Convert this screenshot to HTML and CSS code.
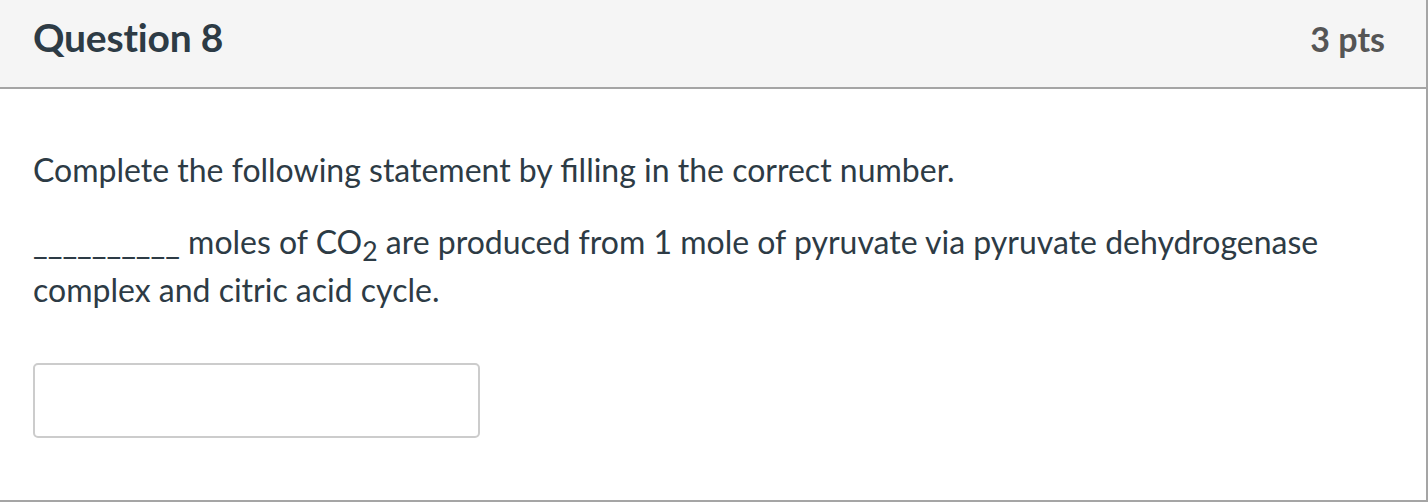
FILE: index.html
```html
<!DOCTYPE html>
<html lang="en">
<head>
<meta charset="utf-8">
<title>Question 8</title>
<link rel="stylesheet" href="styles.css">
</head>
<body>
<div class="question">
  <div class="question-header">
    <h2 class="question-title">Question 8</h2>
    <span class="question-points">3 pts</span>
  </div>
  <div class="question-body">
    <p class="question-text">Complete the following statement by filling in the correct number.</p>
    <p class="question-text">__________ moles of CO<sub class="sub">2</sub> are produced from 1 mole of pyruvate via pyruvate dehydrogenase complex and citric acid cycle.</p>
    <input class="answer-input" type="text" aria-label="Answer">
  </div>
</div>
</body>
</html>
```

FILE: styles.css
```css
html, body {
  margin: 0;
  padding: 0;
  background: #ffffff;
}

body {
  font-family: Lato, "Open Sans", "Liberation Sans", sans-serif;
  color: #2d3b45;
}

.question {
  width: 1426px;
  height: 500px;
  border-right: 2px solid #a5a5a5;
  border-bottom: 2px solid #a5a5a5;
  display: flex;
  flex-direction: column;
}

.question-header {
  height: 89px;
  box-sizing: border-box;
  background: #f5f5f5;
  border-bottom: 2px solid #a5a5a5;
  display: flex;
  align-items: baseline;
  justify-content: space-between;
  padding: 14px 41px 0 33px;
  flex: 0 0 auto;
}

.question-title {
  margin: 0;
  font-size: 39px;
  line-height: normal;
  font-weight: 700;
  color: #2d3b45;
  letter-spacing: -0.2px;
}

.question-points {
  font-size: 34px;
  font-weight: 700;
  color: #555555;
}

.question-body {
  padding: 57px 33px 0 33px;
  flex: 1 1 auto;
}

.question-text {
  margin: 0 0 24px 0;
  font-size: 32px;
  line-height: 48px;
}

.sub {
  font-size: 0.83em;
  vertical-align: -0.25em;
  line-height: 0;
}

.answer-input {
  display: block;
  margin-top: 49px;
  width: 447px;
  height: 75px;
  box-sizing: border-box;
  border: 2px solid #cccccc;
  border-radius: 5px;
  background: #ffffff;
  font-family: inherit;
  font-size: 29px;
  padding: 0 12px;
}
```
